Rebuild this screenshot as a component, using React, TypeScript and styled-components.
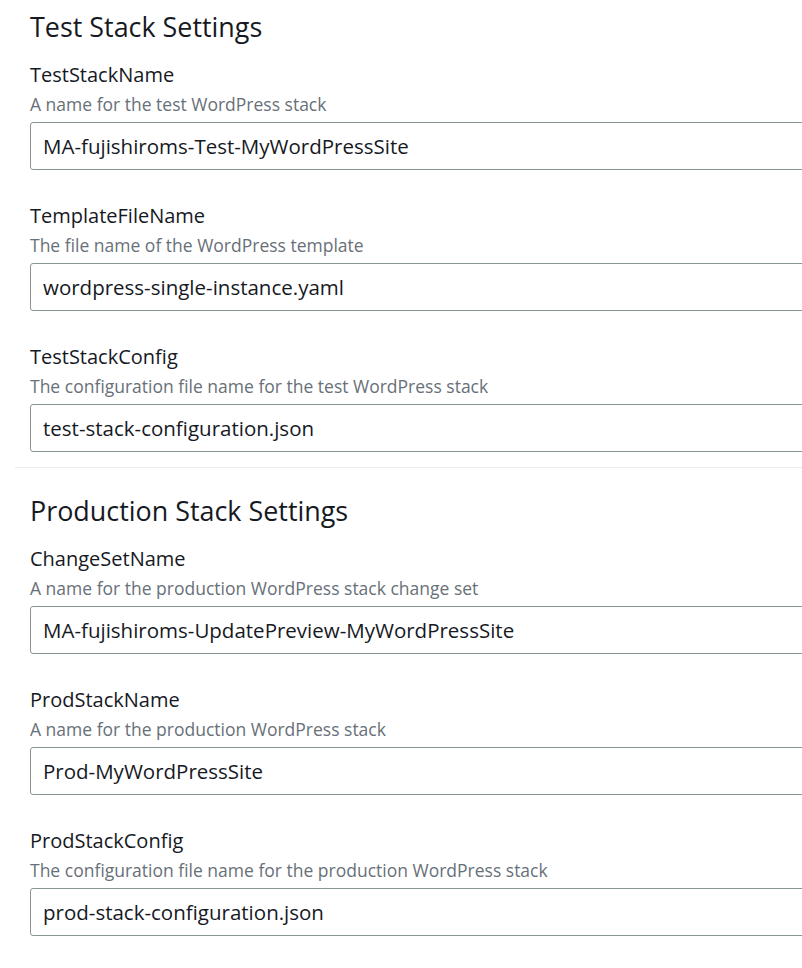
import React from 'react';
import styled, { createGlobalStyle } from 'styled-components';

const GlobalStyle = createGlobalStyle`
    html, body {
        margin: 0;
        padding: 0;
        background: #ffffff;
        overflow: hidden;
    }
    body {
        font-family: "Open Sans", "Noto Sans", Arial, sans-serif;
        color: #16191f;
    }
`

const Page = styled.div`
    padding-left: 15px;
    padding-top: 11px;
`

const Section = styled.section<{ $divided?: boolean }>`
    padding: 0 0 0 15px;
    border-top: ${(props) => (props.$divided ? 'solid 1px #eaeded' : 'none')};
    margin-top: ${(props) => (props.$divided ? '15px' : '0')};
    padding-top: ${(props) => (props.$divided ? '27px' : '0')};
`

const SectionTitle = styled.h2`
    margin: 0 0 20px 0;
    font-size: 26.9px;
    font-weight: 400;
    line-height: 32px;
    color: #16191f;
`

const Field = styled.div`
    margin-bottom: 34px;
    &:last-child{
        margin-bottom: 0;
    }
`

const Label = styled.div`
    font-size: 20px;
    line-height: 24px;
    color: #16191f;
`

const Description = styled.div`
    font-size: 17.5px;
    line-height: 22px;
    color: #687078;
    margin-top: 6px;
    margin-bottom: 7px;
`

const Input = styled.input`
    box-sizing: border-box;
    display: block;
    width: calc(100% + 20px);
    height: 48px;
    padding: 0 12px;
    border: solid 1px #879596;
    border-radius: 3px;
    font-family: inherit;
    font-size: 20.5px;
    color: #16191f;
    background: #ffffff;
    outline: none;
`

type Setting = {
    name: string,
    description: string,
    value: string
}

const testSettings: Setting[] = [
    { name: 'TestStackName', description: 'A name for the test WordPress stack', value: 'MA-fujishiroms-Test-MyWordPressSite' },
    { name: 'TemplateFileName', description: 'The file name of the WordPress template', value: 'wordpress-single-instance.yaml' },
    { name: 'TestStackConfig', description: 'The configuration file name for the test WordPress stack', value: 'test-stack-configuration.json' }
]

const prodSettings: Setting[] = [
    { name: 'ChangeSetName', description: 'A name for the production WordPress stack change set', value: 'MA-fujishiroms-UpdatePreview-MyWordPressSite' },
    { name: 'ProdStackName', description: 'A name for the production WordPress stack', value: 'Prod-MyWordPressSite' },
    { name: 'ProdStackConfig', description: 'The configuration file name for the production WordPress stack', value: 'prod-stack-configuration.json' }
]

const SettingField = ({ setting }: { setting: Setting }) => {
    return (
        <Field>
            <Label>{setting.name}</Label>
            <Description>{setting.description}</Description>
            <Input type="text" defaultValue={setting.value} />
        </Field>
    )
}

const App = () => {
    return (
        <Page>
            <GlobalStyle />
            <Section>
                <SectionTitle>Test Stack Settings</SectionTitle>
                {testSettings.map((s) => <SettingField key={s.name} setting={s} />)}
            </Section>
            <Section $divided>
                <SectionTitle>Production Stack Settings</SectionTitle>
                {prodSettings.map((s) => <SettingField key={s.name} setting={s} />)}
            </Section>
        </Page>
    )
}

export default App
